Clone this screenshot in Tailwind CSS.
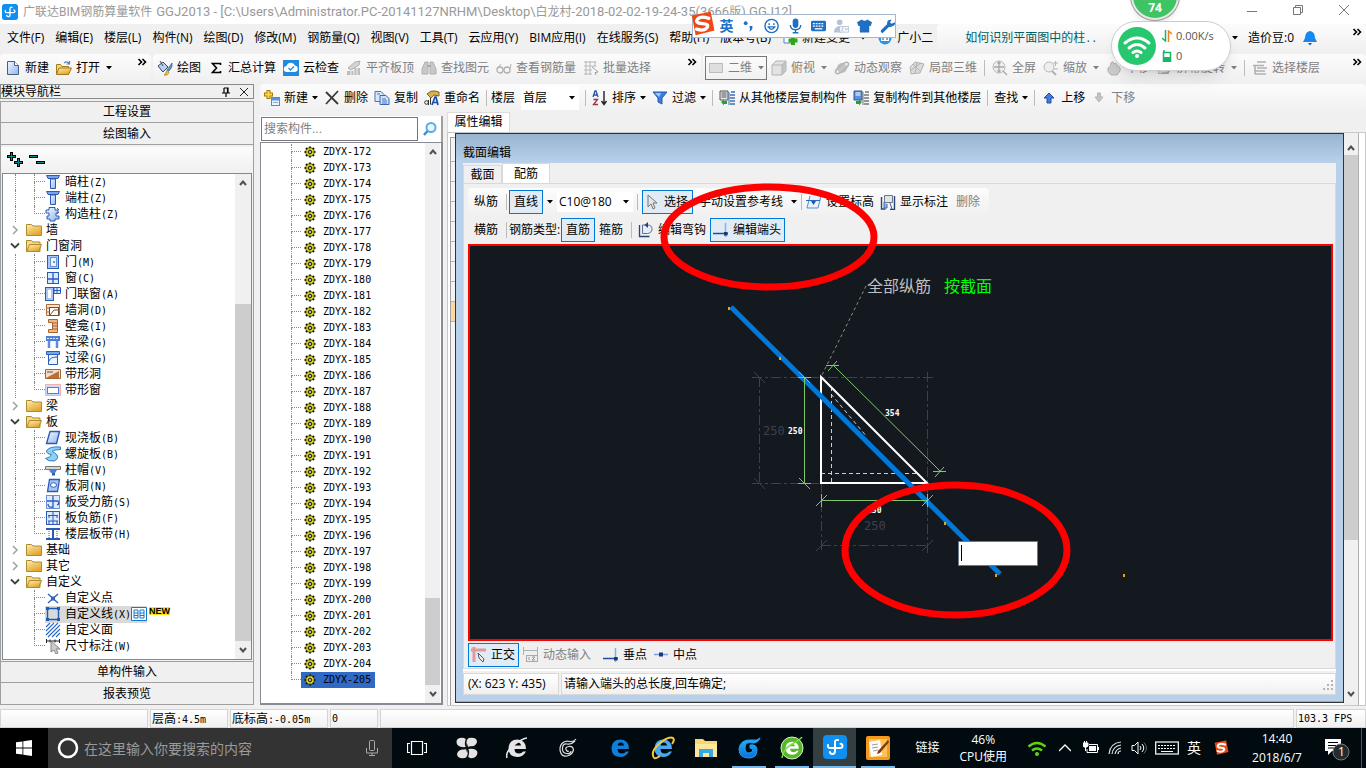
<!DOCTYPE html>
<html lang="zh-CN">
<head>
<meta charset="utf-8">
<title>广联达BIM钢筋算量软件 GGJ2013</title>
<script src="https://cdn.jsdelivr.net/npm/@tailwindcss/browser@4"></script>
</head>
<body class="relative flex h-screen flex-col overflow-hidden bg-[#f0f0f0] font-['Open_Sans','Noto_Sans_CJK_SC',sans-serif] text-xs leading-4 whitespace-nowrap text-black">

<svg class="absolute size-0">
  <defs>
    <linearGradient id="gBlue" x1="0" y1="0" x2="1" y2="1"><stop offset="0" stop-color="#f4f9ff"/><stop offset="1" stop-color="#8fb4f0"/></linearGradient>
    <linearGradient id="gGold" x1="0" y1="0" x2="0.6" y2="1"><stop offset="0" stop-color="#fdf0b0"/><stop offset="1" stop-color="#e2a52c"/></linearGradient>
    <linearGradient id="gSky" x1="0" y1="0" x2="0" y2="1"><stop offset="0" stop-color="#29b6ff"/><stop offset="1" stop-color="#0a6fd8"/></linearGradient>
  </defs>
  <symbol id="dn" viewBox="0 0 6 4"><path d="M0 0h6L3 3.5z" fill="currentColor"/></symbol>
  <symbol id="more" viewBox="0 0 9 8"><path d="M1 1l3 3-3 3M5 1l3 3-3 3" fill="none" stroke="#000" stroke-width="1.6"/></symbol>
  <symbol id="up-chev" viewBox="0 0 8 6"><path d="M1 5l3-3.5L7 5" fill="none" stroke="#505050" stroke-width="2"/></symbol>
  <symbol id="dn-chev" viewBox="0 0 8 6"><path d="M1 1l3 3.5L7 1" fill="none" stroke="#505050" stroke-width="2"/></symbol>
  <symbol id="ggj" viewBox="0 0 24 24"><rect width="24" height="24" rx="4" fill="#0f8fef"/><path d="M15 5q-3-.5-3 2v9q0 3-2.500 3t-2.500-2M5 10q-.5 3 2 3h10q2.500 0 2.500-2t-2-2.200" fill="none" stroke="#fff" stroke-width="2" stroke-linecap="round"/></symbol>
  <symbol id="doc" viewBox="0 0 16 16"><path d="M2.500 1.500h7l4 4v9h-11z" fill="url(#gBlue)" stroke="#47607f"/><path d="M9.500 1.500v4h4" fill="#fff" stroke="#47607f"/></symbol>
  <symbol id="open" viewBox="0 0 16 16"><path d="M.5 14V4.500h4l1.500 2h6.500V14z" fill="#f7d874" stroke="#a37a1d"/><path d="M3 8h12.500l-3 6.500H.500z" fill="url(#gGold)" stroke="#a37a1d"/><path d="M8 3q3-2.500 5 .5M13.500 1v3h-3" fill="none" stroke="#5b82b5" stroke-width="1.200"/></symbol>
  <symbol id="draw" viewBox="0 0 16 16"><path d="M1 6l5-4 5 5-5 5z" fill="#b9d1ef" stroke="#2c4a7a"/><path d="M3 1l3 5" stroke="#444"/><path d="M15 3q1 4-3 8l-2-1z" fill="#6b93cf" stroke="#36578c" stroke-width=".7"/><path d="M10 10l2 2q-1 4-5 3 2-1 3-5z" fill="#f1c231" stroke="#a67a12" stroke-width=".7"/></symbol>
  <symbol id="sum" viewBox="0 0 16 16"><path d="M12.500 5V3.500h-8l4 4.500-4 4.500h8V11" fill="none" stroke="#000" stroke-width="1.600"/></symbol>
  <symbol id="cloud" viewBox="0 0 16 16"><rect width="16" height="16" fill="#1f8ae0"/><path d="M4 12a3 3 0 01-.5-6A4.500 4.500 0 0112 5.500 3.300 3.300 0 0112 12z" fill="#fff"/><path d="M5.500 8l2 2L11 6.500" fill="none" stroke="#1f8ae0" stroke-width="1.300"/></symbol>
  <symbol id="g-flat" viewBox="0 0 16 16"><path d="M2 8l7-6 5-1-1 4-8 5z" fill="#d4d4d4" stroke="#b0b0b0"/><path d="M1 11h7V8h6v7H1z" fill="#bdbdbd"/><path d="M5 11v4M8 9v6M11 8v7" stroke="#eee"/></symbol>
  <symbol id="g-bino" viewBox="0 0 16 16"><path d="M4 2h3v12H1V9zM9 2h3l3 7v5H9z" fill="#c8c8c8" stroke="#b0b0b0"/><path d="M6 6h4" stroke="#aaa" stroke-width="2"/></symbol>
  <symbol id="g-glass" viewBox="0 0 16 16"><circle cx="4" cy="10" r="3" fill="none" stroke="#b0b0b0" stroke-width="1.300"/><circle cx="11" cy="10" r="3" fill="none" stroke="#b0b0b0" stroke-width="1.300"/><path d="M1 9l4-5M14 9l1-5" stroke="#b0b0b0"/></symbol>
  <symbol id="g-batch" viewBox="0 0 16 16"><path d="M1 2h12M1 6h12M1 10h8M1 14h8M3 1v14M7 1v14M12 1v6" stroke="#b8b8b8"/><path d="M9 7l6 5-3 .5 1 2.500" fill="#fff" stroke="#9a9a9a"/></symbol>
  <symbol id="g-rect" viewBox="0 0 16 16"><rect x="1.500" y="3.500" width="13" height="9" fill="#dedede" stroke="#bcbcbc"/></symbol>
  <symbol id="g-cube" viewBox="0 0 16 16"><path d="M1 5l4-4h10v10l-4 4H1z" fill="#e2e2e2" stroke="#b4b4b4"/><path d="M11 5l4-4v10l-4 4z" fill="#c4c4c4"/><path d="M1 5h10v10M11 5l4-4" fill="none" stroke="#b4b4b4"/></symbol>
  <symbol id="g-orbit" viewBox="0 0 16 16"><circle cx="8" cy="8" r="5" fill="#c4c4c4"/><ellipse cx="8" cy="8" rx="8" ry="3" transform="rotate(-40 8 8)" fill="none" stroke="#b4b4b4" stroke-width="1.500"/></symbol>
  <symbol id="g-part" viewBox="0 0 16 16"><path d="M1 7l5-5 9 2-4 9-9 1z" fill="#dadada" stroke="#b4b4b4"/><path d="M4 4l8 8M2 10l10-7M8 2L6 14" stroke="#b4b4b4"/></symbol>
  <symbol id="g-full" viewBox="0 0 16 16"><circle cx="7" cy="7" r="6" fill="#eee" stroke="#b8b8b8"/><path d="M7 2v10M2 7h10M5.500 3.500L7 2l1.500 1.500M5.500 10.500L7 12l1.500-1.500M11 11l4 4" fill="none" stroke="#a8a8a8" stroke-width="1.300"/></symbol>
  <symbol id="g-zoom" viewBox="0 0 16 16"><circle cx="6" cy="7" r="5" fill="#eee" stroke="#b8b8b8"/><path d="M9 11l4 4" stroke="#b0b0b0" stroke-width="2"/><path d="M10 3h5M12.500 1v5M11 9h4" stroke="#b5b5b5"/></symbol>
  <symbol id="g-hand" viewBox="0 0 16 16"><path d="M2 8q3-1 3-5 2-3 3 1 3-2 3 2 4 0 3 5l-3 4H5q-4-3-3-7z" fill="#ccc" stroke="#b0b0b0"/></symbol>
  <symbol id="g-rot" viewBox="0 0 16 16"><rect x="1.500" y="3.500" width="10" height="10" fill="#ddd" stroke="#b8b8b8"/><path d="M5 13q8 2 9-8M12 7l2-3 2 3" fill="none" stroke="#a4a4a4" stroke-width="1.500"/></symbol>
  <symbol id="g-floor" viewBox="0 0 16 16"><path d="M5 2h9M1 5.500h11M5 8h10M3 11h10M3 14h11M3 6v8" stroke="#b0b0b0" stroke-width="1.600"/></symbol>
  <symbol id="newc" viewBox="0 0 16 16"><rect x="7.500" y="7.500" width="8" height="8" fill="#eaf3ff" stroke="#5c87c5"/><path d="M8 8h8v2.500H8z" fill="#5c93dd"/><path d="M9 12.500h5" stroke="#8ab"/><path d="M4.500 0v9M0 4.500h9" stroke="#a67c00" stroke-width="4"/><path d="M4.500 1v7M1 4.500h7" stroke="#ffd944" stroke-width="2"/></symbol>
  <symbol id="del" viewBox="0 0 16 16"><path d="M2 2l12 12M14 1L2 14" stroke="#3a3a3a" stroke-width="1.800"/></symbol>
  <symbol id="copy" viewBox="0 0 16 16"><path d="M1 1.500h6l3 3v7H1z" fill="#dbe8fb" stroke="#4a73b4"/><path d="M6 5.500h6l3 3v6H6z" fill="#cfe1fb" stroke="#3d66ab"/><path d="M8 9h4M8 11h5M8 13h5M3 4h3" stroke="#4a73b4"/></symbol>
  <symbol id="ren" viewBox="0 0 16 16"><path d="M3 4q4-4 8-3l4 1v4l-5-1-3 3z" fill="#d8b347" stroke="#7d6520"/><path d="M8 15l3-8h1l2 8M9 12.500h4" fill="none" stroke="#1b4fa8" stroke-width="1.700"/><circle cx="2.500" cy="12.500" r="1.800" fill="none" stroke="#333"/><path d="M4.500 10v5M6.500 8v6.500" stroke="#333"/></symbol>
  <symbol id="az" viewBox="0 0 16 16"><path d="M1 7l2-6h1l2 6M2 5h3" fill="none" stroke="#2b4fa8" stroke-width="1.300"/><path d="M1.500 9.500h4l-4 5h4.500" fill="none" stroke="#a03050" stroke-width="1.300"/><path d="M12 1v13M9.500 11l2.500 3.500 2.500-3.500" fill="none" stroke="#222" stroke-width="1.400"/></symbol>
  <symbol id="filter" viewBox="0 0 16 16"><path d="M1 2h14L10 8v6l-4-2V8z" fill="#3f7de0" stroke="#2459b0"/><path d="M3 3h6L7 7z" fill="#a9c9fa"/></symbol>
  <symbol id="cfrom" viewBox="0 0 16 16"><path d="M1 1h8v9H1z" fill="#e5e5e5" stroke="#555"/><path d="M2.500 3h5M2.500 5h5M2.500 7h5" stroke="#555"/><path d="M12 2h4M11 5h5M11 8h5M11 11h5M11 14h5" stroke="#3d6db8" stroke-width="1.700"/><path d="M10 2v13" stroke="#3d6db8"/><path d="M2 12l3-2.500V11h3v3H5v1.500z" fill="#1ea33a"/></symbol>
  <symbol id="cto" viewBox="0 0 16 16"><path d="M1 1h8v9H1z" fill="#5c91dc" stroke="#2a5599"/><path d="M2.500 3h5M2.500 5h5" stroke="#fff"/><path d="M12 2h4M11 5h5M11 8h5M11 11h5M11 14h5" stroke="#777" stroke-width="1.700"/><path d="M10 2v13" stroke="#777"/><path d="M9 12L6 9.500V11H3v3h3v1.500z" fill="#1ea33a"/></symbol>
  <symbol id="a-up" viewBox="0 0 16 16"><path d="M8 3l5 5h-3v5H6V8H3z" fill="#3f7de0" stroke="#234f9e"/></symbol>
  <symbol id="a-dn" viewBox="0 0 16 16"><path d="M8 12l4-5h-2.500V3h-3v4H4z" fill="#c4c4c4" stroke="#b4b4b4"/></symbol>
  <symbol id="gear" viewBox="0 0 12 12"><path d="M6 .5v11M.5 6h11M2 2l8 8M10 2l-8 8" stroke="#1c1c00" stroke-width="2.200"/><circle cx="6" cy="6" r="4.200" fill="#f2ea2a" stroke="#2a2a00" stroke-width=".8"/><path d="M6 2.500v7M2.500 6h7M3.700 3.700l4.600 4.600M8.300 3.700L3.700 8.300" stroke="#5a5600" stroke-width=".7"/><circle cx="6" cy="6" r="1.500" fill="#fff" stroke="#111"/></symbol>
  <symbol id="folder" viewBox="0 0 16 16"><path d="M.5 13.500v-11h5l1.500 1.500h8.500v9.500z" fill="url(#gGold)" stroke="#b08a30"/></symbol>
  <symbol id="folderO" viewBox="0 0 16 16"><path d="M.5 13.500v-11h5l1.500 1.500h7v9.500z" fill="#f3d886" stroke="#b08a30"/><path d="M3.500 6.500h12l-3 7H.8z" fill="url(#gGold)" stroke="#b08a30"/></symbol>
  <symbol id="t-col" viewBox="0 0 16 16"><path d="M1.500 1.500h13l-1.500 3H3z" fill="#7aa4ea" stroke="#2b5bb8"/><path d="M5.500 5h5v9.500h-5z" fill="url(#gBlue)" stroke="#2b5bb8"/></symbol>
  <symbol id="t-gz" viewBox="0 0 16 16"><path d="M4 1.500h6V4h3v3h-2v3h3v3h-4v2H5v-2H2v-3h2V7H1V4h3z" fill="url(#gBlue)" stroke="#2b5bb8"/><path d="M12 2l2 2M12 8l2-2" stroke="#557"/></symbol>
  <symbol id="t-door" viewBox="0 0 16 16"><rect x="2.500" y="1.500" width="11" height="13" fill="#a9c6f7" stroke="#2b5bb8"/><rect x="5.500" y="3.500" width="6" height="9" fill="#eaf3ff" stroke="#6c93d8"/><path d="M9 7v2" stroke="#234"/></symbol>
  <symbol id="t-win" viewBox="0 0 16 16"><rect x="2.500" y="2.500" width="11" height="11" fill="#dceaff" stroke="#2b5bb8"/><path d="M8 2v12M2 9h12" stroke="#2b5bb8" stroke-width="1.300"/></symbol>
  <symbol id="t-dw" viewBox="0 0 16 16"><rect x=".5" y="1.500" width="8" height="13" fill="#a9c6f7" stroke="#2b5bb8"/><rect x="3" y="4" width="3" height="8" fill="#fff"/><path d="M9 1.500h6.500v6H9zM12 1v7M9 4.500h7" fill="#dceaff" stroke="#2b5bb8"/></symbol>
  <symbol id="t-hole" viewBox="0 0 16 16"><path d="M1.500 2.500h13v11h-13zM1 6h4M1 10h4" fill="#fbe3d0" stroke="#b06a3a"/><rect x="4.500" y="5.500" width="9" height="8" fill="#fff" stroke="#7d4a28"/><path d="M5 13l4-5h4" fill="none" stroke="#7d4a28"/></symbol>
  <symbol id="t-niche" viewBox="0 0 16 16"><path d="M3.500 1.500h9v13h-9v-3h4v-7h-4z" fill="#f0b98a" stroke="#a8642e"/><path d="M8 5h4M8 8h4M8 11h4" stroke="#a8642e"/></symbol>
  <symbol id="t-beam" viewBox="0 0 16 16"><path d="M1 2h14v5H1z" fill="#4c7fd6"/><path d="M2 4.500h12" stroke="#dce9ff" stroke-dasharray="2 1"/><path d="M4 7v7M12 7v7" stroke="#5c8de0" stroke-width="2.500"/></symbol>
  <symbol id="t-lintel" viewBox="0 0 16 16"><path d="M1.500 1.500h13v3h-13z" fill="#7aa4ea" stroke="#2b5bb8"/><path d="M3.500 4.500h9v10h-9z" fill="#eaf3ff" stroke="#2b5bb8"/><path d="M4 11q1-4 8-4" fill="none" stroke="#2b5bb8"/></symbol>
  <symbol id="t-strip" viewBox="0 0 16 16"><path d="M.5 3.500h15v9H.5z" fill="#f6dcc8" stroke="#a8642e"/><path d="M1 12L14 5v7z" fill="#b4703f"/><path d="M2 6h6" stroke="#7d4a28"/></symbol>
  <symbol id="t-stripw" viewBox="0 0 16 16"><path d="M.5 2.500h15v11H.5z" fill="#c9dcfb" stroke="#f0b0b0"/><rect x="2.500" y="5.500" width="11" height="6" fill="#fff" stroke="#4c7fd6"/></symbol>
  <symbol id="t-slab" viewBox="0 0 16 16"><path d="M5 1.500h9.500l-3 12H1.500z" fill="url(#gBlue)" stroke="#2b5bb8" stroke-width="1.400"/></symbol>
  <symbol id="t-spiral" viewBox="0 0 16 16"><path d="M15.500 1Q4 0 1.500 5q0 3 5 3.500-1 3-6 4Q3 15.500 9 15q5-2 3-6Q9 6 7 5.500q2-2 8.500-2z" fill="#8fd0f5" stroke="#2f7ec4"/></symbol>
  <symbol id="t-cap" viewBox="0 0 16 16"><path d="M.5 4.500h15v3H.5z" fill="#d8d4c8" stroke="#777"/><path d="M4 8h8l-2 3H6z" fill="#4c7fd6"/><path d="M7 11h3v2.500H7z" fill="#2b5bb8"/></symbol>
  <symbol id="t-shole" viewBox="0 0 16 16"><path d="M4.500 1.500h10l-2 12h-10z" fill="#a9c6f7" stroke="#2b5bb8" stroke-width="1.300"/><ellipse cx="8.500" cy="7" rx="3" ry="2.300" fill="#fff" stroke="#2b5bb8"/></symbol>
  <symbol id="t-bar" viewBox="0 0 16 16"><rect x="1.500" y="1.500" width="13" height="13" fill="#dceaff" stroke="#6c93d8"/><path d="M8 2v12M2 7h11q2 3-1 4M8 13q-5 1-5-3" fill="none" stroke="#2b5bb8" stroke-width="1.300"/></symbol>
  <symbol id="t-neg" viewBox="0 0 16 16"><rect x="1.500" y="1.500" width="13" height="13" fill="#dceaff" stroke="#2b5bb8"/><path d="M8 2v12M3 5.500h10M3 11h10M4 5v3M12 5v3M4 11v3M12 11v3" stroke="#2b5bb8"/></symbol>
  <symbol id="t-band" viewBox="0 0 16 16"><path d="M1 3h14M1 13h14" stroke="#2b5bb8" stroke-width="2"/><path d="M4 3v10M12 3v10" stroke="#2b5bb8" stroke-dasharray="1 1"/><path d="M8 3v10" stroke="#2b5bb8" stroke-width="2"/></symbol>
  <symbol id="t-pt" viewBox="0 0 16 16"><path d="M3 4l10 9M13 4L3 13" stroke="#3567b8" stroke-width="1.400"/><rect x="6" y="6.500" width="4" height="4" fill="#3567b8"/></symbol>
  <symbol id="t-line" viewBox="0 0 16 16"><path d="M2.500 2.500h11v11h-11z" fill="none" stroke="#1c5cb8" stroke-width="1.400"/><path d="M1 1h3v3H1zM12 1h3v3h-3zM1 12h3v3H1zM12 12h3v3h-3z" fill="#1c5cb8"/></symbol>
  <symbol id="t-face" viewBox="0 0 16 16"><path d="M1 5l4-4M1 9l8-8M1 13l12-12M3 15L15 3M7 15l8-8M11 15l4-4" stroke="#2b6bc8" stroke-width="1.100"/></symbol>
  <symbol id="t-dim" viewBox="0 0 16 16"><path d="M1 3h14M1.500 1v4M14.500 1v4M5 1.500v3M10 1.500v3" stroke="#222"/><path d="M6 3l9 8h-4l2 4-2 1-2-4-3 2z" fill="#ccc" stroke="#888"/></symbol>
  <symbol id="cursor" viewBox="0 0 16 16"><path d="M4 1v12l3-3 2 5 2-1-2-5h4z" fill="#e4e4e4" stroke="#777"/></symbol>
  <symbol id="perp" viewBox="0 0 16 16"><path d="M12.500 1v14" stroke="#85b0e0" stroke-width="1.500"/><path d="M0 11.500h15" stroke="#1c4f9c" stroke-width="1.500"/><rect x="11" y="10" width="3.500" height="3.500" fill="#163a80"/></symbol>
  <symbol id="sogou" viewBox="0 0 28 28"><path d="M3 5l20-4 4 20-20 5z" fill="#ee4a16"/><path d="M21 8Q12 5 9 9t5 4.500 5 4.500-11 1.500" fill="none" stroke="#fff" stroke-width="3.500" stroke-linecap="round"/></symbol>
  <symbol id="e" viewBox="0 0 24 24"><path d="M21 15.500q-3 5.500-9 5.500-8.500-.5-8.500-9Q4 3.500 12.500 3.500q8.500.5 8.500 9.500H9.500q0 4.500 4.500 4.500 3 0 4-2zM9.500 9.500H16q-.5-3-3.200-3T9.500 9.500z" fill="currentColor" fill-rule="evenodd"/></symbol>
</svg>

<!-- Title bar -->
<header class="flex h-6 shrink-0 items-center gap-1 bg-white pl-0.5 text-[#999]">
  <svg class="size-4"><use href="#ggj"/></svg>
  <h1 class="flex flex-1 items-baseline overflow-hidden pl-px font-['Roboto','Noto_Sans_CJK_SC',sans-serif]">广联达BIM钢筋算量软件<span class="ml-1 text-[13px]">GGJ2013 - [C:\Users\Administrator.PC-20141127NRHM\Desktop\</span>白龙村<span class="text-[13px]">-2018-02-02-19-24-35(3666</span>版<span class="text-[13px]">).GGJ12]</span></h1>
  <div class="flex pb-1">
    <button class="flex w-11 justify-center" aria-label="最小化"><svg class="size-3" viewBox="0 0 12 12"><path d="M1 7.500h10" stroke="#777"/></svg></button>
    <button class="flex w-12 justify-center" aria-label="还原"><svg class="size-3" viewBox="0 0 12 12"><path d="M1.500 3.500h7v7h-7zM3.500 3V1.500h7v7H9" fill="none" stroke="#777"/></svg></button>
    <button class="flex w-11 justify-center" aria-label="关闭"><svg class="size-3" viewBox="0 0 12 12"><path d="M1 1l10 10M11 1L1 11" stroke="#777"/></svg></button>
  </div>
</header>

<!-- Menu bar -->
<nav class="flex h-[30px] shrink-0 items-center pb-0.5">
  <div id="menu" class="flex items-center gap-[11px] pl-[7px]"></div>
  <div class="ml-1 flex flex-1 items-center self-stretch rounded bg-linear-to-b from-[#fcfcfc] to-[#f0f0f0] pr-1 pl-7">
    <a href="#" class="font-['DejaVu_Sans_Mono','Noto_Sans_CJK_SC',monospace] text-[#006064]">如何识别平面图中的柱<span class="text-[10px]">..</span></a>
    <button class="ml-auto flex items-center gap-2.5"><svg class="h-1 w-1.5"><use href="#dn"/></svg>造价豆:0</button>
    <button class="mr-8.5 ml-2" aria-label="通知"><svg class="size-4" viewBox="0 0 16 16"><path d="M8 1q5 1 5 7l2 4H1l2-4q0-6 5-7z" fill="#1688f0"/><path d="M6 13h4l-2 2.500z" fill="#0b5cb0"/></svg></button>
    <svg class="mb-3 h-2 w-2.5"><use href="#more"/></svg>
  </div>
</nav>

<!-- Main toolbar -->
<div class="flex h-[30px] shrink-0 items-stretch gap-0.5 pb-0.5">
  <div class="flex w-[151px] items-center gap-[7px] rounded bg-linear-to-b from-[#fcfcfc] to-[#f0f0f0] pl-[5px]">
    <button class="flex items-center gap-1"><svg class="size-4"><use href="#doc"/></svg>新建</button>
    <button class="flex items-center gap-1"><svg class="size-4"><use href="#open"/></svg>打开<svg class="ml-0.5 h-1 w-1.5"><use href="#dn"/></svg></button>
    <svg class="mr-1 mb-3 ml-auto h-2 w-2.5"><use href="#more"/></svg>
  </div>
  <div class="flex w-[548px] items-center rounded bg-linear-to-b from-[#fcfcfc] to-[#f0f0f0] pl-1">
    <div id="tb1" class="flex items-center gap-[7px]"></div>
    <svg class="mr-1 mb-3 ml-auto h-2 w-2.5"><use href="#more"/></svg>
  </div>
  <div class="flex flex-1 items-center rounded bg-linear-to-b from-[#fcfcfc] to-[#f0f0f0] pl-0.5 text-[#808080]">
    <button class="mr-1 flex h-6 w-[62px] items-center gap-1 border border-[#777] px-0.5"><svg class="size-4"><use href="#g-rect"/></svg>二维<svg class="ml-0.5 h-1 w-1.5"><use href="#dn"/></svg></button>
    <div id="tb2" class="flex items-center gap-[7px]"></div>
    <svg class="mr-1 mb-3 ml-auto h-2 w-2.5"><use href="#more"/></svg>
  </div>
</div>

<!-- Workspace -->
<main class="flex min-h-0 flex-1">
  <!-- Module navigation -->
  <aside class="flex w-[254px] shrink-0 flex-col font-['DejaVu_Sans_Mono','Noto_Sans_CJK_SC',monospace]">
    <div class="flex h-[15px] shrink-0 items-center border border-[#8a8a8a] pr-1">
      <h2 class="flex-1 leading-3">模块导航栏</h2>
      <button class="mr-2" aria-label="固定"><svg class="size-2.5" viewBox="0 0 10 10"><path d="M3 1h4v5M3 1v5M1 6h8M5 6v4M6.500 1v5" fill="none" stroke="#000" stroke-width="1.200"/></svg></button>
      <button aria-label="关闭面板"><svg class="size-2.5" viewBox="0 0 10 10"><path d="M1 1l8 8M9 1L1 9" stroke="#222"/></svg></button>
    </div>
    <div class="mt-0.5 flex flex-1 flex-col border-x border-[#a0a0a0]">
      <button class="h-[22px] shrink-0 border-b border-t border-t-[#a0a0a0] border-b-[#a0a0a0]">工程设置</button>
      <button class="h-[22px] shrink-0 border-b border-[#a0a0a0]">绘图输入</button>
      <div class="mt-0.5 flex h-[26px] shrink-0 items-center gap-1.5 bg-linear-to-b from-[#fcfcfc] to-[#f0f0f0] pl-1.5">
        <button aria-label="全部展开"><svg class="h-4 w-4" viewBox="0 0 16 16"><path d="M4.500 0v9M0 4.500h9M11.500 6v9M7 10.500h9" stroke="#000" stroke-width="3"/><path d="M4.500 1v7M1 4.500h7M11.500 7v7M8 10.500h7" stroke="#0a8a8a"/></svg></button>
        <button aria-label="全部折叠"><svg class="h-4 w-4" viewBox="0 0 16 16"><path d="M0 4.500h9M7 10.500h9" stroke="#000" stroke-width="3"/><path d="M1 4.500h7M8 10.500h7" stroke="#0a8a8a"/></svg></button>
      </div>
      <div class="mx-px flex flex-1 border border-[#7f8a96] bg-white">
        <ul id="tree" class="flex-1"></ul>
        <div class="flex w-4 flex-col items-center bg-[#f0f0f0] py-1.5">
          <svg class="h-1.5 w-2"><use href="#up-chev"/></svg>
          <div class="mt-[118px] w-full flex-1 bg-[#cdcdcd]"></div>
          <svg class="mt-1.5 h-1.5 w-2"><use href="#dn-chev"/></svg>
        </div>
      </div>
      <button class="mt-px h-[22px] shrink-0 border-y border-[#a0a0a0]">单构件输入</button>
      <button class="h-[22px] shrink-0 border-b border-[#a0a0a0]">报表预览</button>
    </div>
    <div class="h-0.5 shrink-0"></div>
  </aside>

  <section class="ml-1.5 flex min-w-0 flex-1 flex-col">
    <div id="tb3" class="flex h-7 shrink-0 items-center gap-1.5 rounded bg-linear-to-b from-[#fcfcfc] to-[#f0f0f0] pl-1"></div>
    <div class="flex min-h-0 flex-1">
      <!-- Component list -->
      <div class="flex w-[183px] shrink-0 flex-col pt-1 pb-0.5 font-['DejaVu_Sans_Mono','Noto_Sans_CJK_SC',monospace]">
        <div class="flex h-[26px] shrink-0 border-r-2 border-[#a0a0a0] bg-white">
          <input class="my-px ml-px w-[157px] border border-[#777] px-0.5 font-['Liberation_Sans','Noto_Sans_CJK_SC',sans-serif] text-xs placeholder:text-[#808080]" placeholder="搜索构件..." aria-label="搜索构件">
          <button class="flex flex-1 items-center justify-center" aria-label="搜索"><svg class="size-4" viewBox="0 0 16 16"><circle cx="9" cy="6.500" r="4.500" fill="#eaf6ff" stroke="#58aee8" stroke-width="2"/><path d="M5.500 10L2 14" stroke="#3c8fd0" stroke-width="2.500"/></svg></button>
        </div>
        <div class="flex flex-1 border border-r-2 border-b-2 border-[#8a8a94] bg-white">
          <ul id="list" class="flex-1 pt-px text-[10px]"></ul>
          <div class="mr-px flex w-[15px] flex-col items-center bg-[#f0f0f0] pt-1.5 pb-1.5">
            <svg class="h-1.5 w-2"><use href="#up-chev"/></svg>
            <div class="mt-auto h-[87px] w-full bg-[#cdcdcd]"></div>
            <svg class="mt-1.5 h-1.5 w-2"><use href="#dn-chev"/></svg>
          </div>
        </div>
      </div>

      <!-- Property editor -->
      <div class="ml-1 flex min-w-0 flex-1 flex-col pb-px">
        <div class="flex h-5 shrink-0"><button class="w-[63px] border border-b-0 border-[#dcdcdc] bg-white pb-0.5">属性编辑</button></div>
        <div class="flex min-h-0 flex-1 border border-[#c8c8c8] bg-white">
          <div class="flex w-[7px] shrink-0 flex-col pt-1 pl-0.5">
            <div class="flex flex-1 flex-col divide-y divide-[#b5b5b5] border-t border-l border-[#a0a0a0] bg-[#f4f4f4]">
              <i class="h-6"></i><i class="h-5"></i><i class="h-5"></i><i class="h-5"></i><i class="h-5"></i><i class="h-5"></i><i class="h-5"></i><i class="h-5"></i><i class="h-5 bg-[#fbd9a0]"></i><i class="flex-1"></i>
            </div>
          </div>

          <!-- Section editor dialog -->
          <div class="mb-0.5 flex min-w-0 flex-1 flex-col border border-[#333] bg-[#b9d0ea]">
            <h2 class="flex h-[29px] shrink-0 items-center bg-linear-to-b from-[#99b4d1] to-[#b9d1ea] pt-2 pl-[7px]">截面编辑</h2>
            <div class="mx-[7px] flex flex-1 flex-col bg-[#f0f0f0]">
              <div class="flex h-5 shrink-0 items-end">
                <button class="h-[18px] w-[39px] border border-b-0 border-[#d9d9d9]">截面</button>
                <button class="h-5 w-12 border border-b-0 border-[#d9d9d9] bg-white">配筋</button>
              </div>
              <div class="flex flex-1 flex-col border border-[#d9d9d9] bg-[#f0f0f0] pt-1 pr-0.5 pl-1">
                <div class="flex h-7 w-[521px] shrink-0 items-center rounded bg-linear-to-b from-[#fcfcfc] to-[#f0f0f0] pl-1.5">
                  <span class="w-8">纵筋</span><i class="mr-0.5 h-4 w-px bg-[#bbb]"></i>
                  <button class="h-6 w-[34px] border border-[#0078d7] bg-[#e0ebf5]">直线</button>
                  <svg class="mx-1 h-1 w-1.5"><use href="#dn"/></svg>
                  <div class="flex h-5 w-[76px] items-center bg-white pr-1">
                    <select class="flex-1 appearance-none pl-0.5" aria-label="纵筋规格"><option>C10@180</option></select>
                    <svg class="h-1 w-1.5"><use href="#dn"/></svg>
                  </div>
                  <i class="mx-1 h-4 w-px bg-[#bbb]"></i>
                  <button class="flex h-6 w-[51px] items-center gap-1 border border-[#0078d7] bg-[#e0ebf5] pl-px"><svg class="size-4"><use href="#cursor"/></svg>选择</button>
                  <button class="ml-1.5 flex items-center gap-2">手动设置参考线<svg class="h-1 w-1.5"><use href="#dn"/></svg></button>
                  <i class="mx-1 h-4 w-px bg-[#bbb]"></i>
                  <button class="flex items-center gap-1"><svg class="size-4" viewBox="0 0 16 16"><path d="M4 2L1 14h11l3-12" fill="#e8f2ff" stroke="#4a90d9"/><path d="M0 6.500h14" stroke="#2a6ac0"/><path d="M5 7l2.500 4L10 7z" fill="#1858b0"/></svg>设置标高</button>
                  <button class="ml-1.5 flex items-center gap-1"><svg class="size-4" viewBox="0 0 16 16"><path d="M1.500 3v12h4M10 15.500h4.500V2" fill="none" stroke="#24467c" stroke-width="1.400"/><path d="M4.500 1.500h8v7h-8z" fill="#dce6f2" stroke="#777"/><path d="M10 9l2 6M4 8v6h3v-4" fill="#8fb4e8" stroke="#3d66ab"/></svg>显示标注</button>
                  <button class="ml-2 text-[#808080]">删除</button>
                </div>
                <div class="flex h-7 shrink-0 items-center pl-1.5">
                  <span class="w-8">横筋</span><i class="mr-0.5 h-4 w-px bg-[#bbb]"></i><span class="w-[52px]">钢筋类型:</span>
                  <button class="h-6 w-[34px] border border-[#0078d7] bg-[#e0ebf5]">直筋</button>
                  <button class="ml-1">箍筋</button>
                  <i class="mr-1.5 ml-2 h-4 w-px bg-[#bbb]"></i>
                  <button class="flex items-center gap-1"><svg class="size-4" viewBox="0 0 16 16"><path d="M1.500 3v11.500h10" fill="none" stroke="#24467c" stroke-width="1.300"/><path d="M4.500 3v8.500h5q4.500-.5 4.500-4.500T9.500 3z" fill="#e8eef8" stroke="#5c6f9c"/><path d="M10 0v6L6.500 3z" fill="#24467c"/></svg>编辑弯钩</button>
                  <button class="ml-1 flex h-6 w-[75px] items-center gap-1 border border-[#0078d7] bg-[#e0ebf5] pl-0.5"><svg class="size-4"><use href="#perp"/></svg>编辑端头</button>
                </div>

                <!-- Drawing canvas -->
                <div class="relative z-10 min-h-0 flex-1 border-2 border-[#f00] bg-[#14181f]">
                  <svg class="absolute inset-0 size-full overflow-visible font-['DejaVu_Sans_Mono','Noto_Sans_CJK_SC',monospace]">
                    <g transform="translate(-470 -246)" fill="none">
                      <g stroke="#3c424c" stroke-dasharray="10 3 3 3">
                        <path d="M752 377.500h181M752 483.500h69M759.500 377v106M821.500 483v70M927.500 372v181M821 545.500h107"/>
                        <path d="M754 372l11 11M754 478l11 11M816 551l11-11M922 551l11-11" stroke-dasharray="none"/>
                      </g>
                      <path d="M866 286L822 375" stroke="#8c8c8c" stroke-dasharray="3 3"/>
                      <path d="M831.500 387v96M821 473.500h96M831 394l36 43" stroke="#b5d2ee" stroke-dasharray="4 3"/>
                      <path d="M821 377v106h106z" stroke="#fff" stroke-width="2"/>
                      <path d="M731 307l269 267" stroke="#0078d7" stroke-width="5"/>
                      <path d="M804.500 377v106M799 372l11 11M799 478l11 11M798 377.500h13M798 483.500h13M821 500.500h107M816 506l11-11M922 506l11-11M821.500 494v13M927.500 494v13M833 365l107 106M828 371l9-10M826 365.500h13M935 477l9-10M933 471.500h13" stroke="#7fc86a"/>
                      <g fill="#e8a020"><path d="M728 307h2v3h-2zM779 357h2v3h-2zM944 522h2v3h-2zM995 574h2v3h-2zM1123 574h2v3h-2z"/></g>
                      <g class="text-base" fill="#c0c0c0"><text x="867" y="292">全部纵筋</text><text x="944" y="292" fill="#00ff00">按截面</text></g>
                      <g class="text-xs" fill="#3c424c"><text x="763" y="435">250</text><text x="864" y="530">250</text></g>
                      <g class="text-[8px] font-bold" fill="#fff"><text x="788" y="434">250</text><text x="885" y="416">354</text><text x="867" y="513">250</text></g>
                      <g stroke="#f00" stroke-width="7"><ellipse cx="769" cy="237" rx="105" ry="50"/><ellipse cx="956" cy="550" rx="111" ry="65"/></g>
                    </g>
                  </svg>
                  <input class="absolute top-[295px] left-[488px] h-[25px] w-20 border border-[#6a7a88] bg-white" aria-label="端头长度">
                  <i class="absolute top-[299px] left-[491px] h-4 w-px bg-black"></i>
                </div>

                <div class="flex h-[27px] shrink-0 items-center">
                  <button class="flex h-6 w-[51px] items-center gap-1 border border-[#0078d7] bg-[#e0ebf5] pl-0.5"><svg class="size-4" viewBox="0 0 16 16"><path d="M0 3h15M3 0v15" stroke="#e09a9a" stroke-width="3"/><path d="M7 6l6 6-1 3-4-4z" fill="#eee" stroke="#556"/></svg>正交</button>
                  <button class="ml-1 flex items-center gap-1 text-[#808080]"><svg class="size-4" viewBox="0 0 16 16"><path d="M.5 0v8M14.500 0v8M1 3.500h13" stroke="#b0b0b0"/><rect x="3.500" y="8.500" width="11" height="6" fill="#eee" stroke="#aaa"/><path d="M6 10v3M9 10h3l-3 3h3" fill="none" stroke="#999"/></svg>动态输入</button>
                  <button class="ml-3 flex items-center gap-1"><svg class="size-4"><use href="#perp"/></svg>垂点</button>
                  <button class="ml-1.5 flex items-center gap-1"><svg class="size-4" viewBox="0 0 16 16"><path d="M1 7.500h14" stroke="#7ba5dc" stroke-width="1.500"/><rect x="6" y="5.500" width="4" height="4" fill="#163a80"/></svg>中点</button>
                </div>
              </div>
              <div class="flex h-[26px] shrink-0 gap-0.5 border-t-2 border-white bg-[#f0f0f0] pt-0.5">
                <span class="w-24 border border-[#d9d9d9] bg-linear-to-b from-white to-[#f0f0f0] pl-1 leading-5">(X: 623 Y: 435)</span>
                <span class="flex flex-1 items-end justify-between border border-[#d9d9d9] bg-linear-to-b from-white to-[#f0f0f0] pl-0.5 leading-5">请输入端头的总长度,回车确定;
                  <svg class="mr-px mb-0.5 size-3" viewBox="0 0 12 12"><path d="M9 0h2v2H9zM9 4h2v2H9zM5 4h2v2H5zM9 8h2v2H9zM5 8h2v2H5zM1 8h2v2H1z" fill="#b4b4b4"/></svg></span>
              </div>
            </div>
            <div class="h-[7px] shrink-0 border-b border-[#5fc3e8]"></div>
          </div>

          <div class="mr-1.5 flex w-[15px] shrink-0 flex-col items-center border-r border-[#b0b0b0] bg-[#f0f0f0] pt-3 pb-2">
            <svg class="h-1.5 w-2"><use href="#up-chev"/></svg>
            <div class="mt-1 h-[385px] w-full bg-[#cdcdcd]"></div>
            <svg class="mt-auto h-1.5 w-2"><use href="#dn-chev"/></svg>
          </div>
        </div>
      </div>
    </div>
  </section>
</main>

<!-- Status bar -->
<footer class="flex h-[21px] shrink-0 gap-0.5 pt-0.5 font-['DejaVu_Sans_Mono','Noto_Sans_CJK_SC',monospace] leading-[18px] *:border *:border-[#d4d4d4] *:bg-linear-to-b *:from-white *:to-[#f0f0f0] *:pl-px">
  <span class="w-[148px]"></span>
  <span class="w-[78px]">层高<span class="text-[10px]">:4.5m</span></span>
  <span class="w-[98px]">底标高<span class="text-[10px]">:-0.05m</span></span>
  <span class="w-12 text-[10px]">0</span>
  <span class="flex-1"></span>
  <span class="w-[70px] text-[10px]">103.3 FPS</span>
</footer>

<!-- Windows taskbar -->
<div class="flex h-10 shrink-0 items-stretch bg-[#010b0f] text-white">
  <button class="flex w-12 items-center justify-center bg-black" aria-label="开始"><svg class="size-4" viewBox="0 0 16 16"><path d="M0 2.300L6.500 1.400V7.600H0zM7.300 1.300L16 0v7.600H7.300zM0 8.400h6.500v6.200L0 13.700zM7.300 8.400H16V16l-8.700-1.300z" fill="#fff"/></svg></button>
  <label class="flex w-[344px] items-center gap-1 bg-[#333] pl-2">
    <svg class="size-6" viewBox="0 0 24 24"><circle cx="12" cy="12" r="9" fill="none" stroke="#fff" stroke-width="2.500"/></svg>
    <input class="w-[276px] font-['Noto_Sans_CJK_SC',sans-serif] text-sm placeholder:text-[#9a9a9a]" placeholder="在这里输入你要搜索的内容">
    <svg class="h-4 w-4" viewBox="0 0 16 16"><rect x="5.500" y=".5" width="5" height="10" rx="1" fill="none" stroke="#aaa"/><path d="M2.500 8v5h11V8M8 13v3M5 15.500h6" fill="none" stroke="#aaa"/></svg>
  </label>
  <div class="flex *:flex *:w-[50px] *:items-center *:justify-center">
    <button aria-label="任务视图"><svg class="h-4 w-5" viewBox="0 0 20 16"><path d="M4.500 1.500h11v13h-11zM3 3.500H.500v9H3M17 3.500h2.500v9H17" fill="none" stroke="#fff" stroke-width="1.200"/></svg></button>
    <button aria-label="搜狗"><svg class="size-6" viewBox="0 0 24 24"><g fill="#e4e4e4"><path d="M11 11Q1 12 1.500 5 3 1 9 2q4 1 2 9zM13 11q-3-8 1-9 8-1 8 4-1 5-9 5z"/><path d="M11 13q3 8-1 9-8 1-8-4 1-5 9-5zM13 13q9-1 9.500 4-1 6-7.500 5-4-1-2-9z"/></g><path d="M12 2q-3 6 0 10t0 10M2 11q6 3 10 1t10 0" fill="none" stroke="#111" stroke-width="1.300"/></svg></button>
    <button aria-label="浏览器"><svg class="size-6 text-[#e6e6e6]" viewBox="0 0 24 24"><use href="#e"/><path d="M2 22Q0 16 9 9T22 2q-3 0-7 3" fill="none" stroke="#e6e6e6" stroke-width="1.500"/></svg></button>
    <button aria-label="广联达"><svg class="size-5" viewBox="0 0 20 20"><path d="M19 1q-2 3-6 2.500-5-1.500-8 2T3.500 14t6.500 4 6.500-6Q16 8 12 8.500t-3 3 3 1.500M18 3q-4 4-8 3t-4.500 4 4 5.500 4.500-2.500" fill="none" stroke="#e0e0e0" stroke-width="1.200"/></svg></button>
  </div>
  <div class="ml-1.5 flex *:flex *:w-[43px] *:items-center *:justify-center">
    <button class="text-[#0f7fdc]" aria-label="Edge"><svg class="size-6"><use href="#e"/></svg></button>
    <button class="text-[#4aa8ee]" aria-label="Internet Explorer"><svg class="size-6" viewBox="0 0 24 24"><use href="#e"/><path d="M3 22Q-1 16 8 8T22 2q2 2-1 6M3 22q2 1 6-2" fill="none" stroke="#f3c93a" stroke-width="2"/></svg></button>
    <button aria-label="文件资源管理器"><svg class="size-6" viewBox="0 0 24 24"><path d="M1 3h8l2 2h12v16H1z" fill="#f7d774"/><path d="M1 8h22v13H1z" fill="#fde79a"/><path d="M5 21v-8h14v8h-4v-4H9v4z" fill="#35a9e4"/></svg></button>
    <button class="bg-[linear-gradient(#76b9ed,#76b9ed)] bg-[length:34px_2px] bg-bottom bg-no-repeat" aria-label="广联达云"><svg class="size-6" viewBox="0 0 24 24"><path d="M23 2q-2 5-7 5-8-2-8 5 0 5 4 5t4-4l-3-1V9q7-1 7 5 0 8-8 8Q2 22 2 13q1-10 13-9 5 1 8-2z" fill="url(#gSky)" stroke="#1fa0f5"/></svg></button>
    <button class="bg-[linear-gradient(#76b9ed,#76b9ed)] bg-[length:34px_2px] bg-bottom bg-no-repeat" aria-label="360浏览器"><svg class="size-6 text-white" viewBox="0 0 24 24"><circle cx="12" cy="12" r="11" fill="#58b82c" stroke="#d8f0c8"/><svg x="3" y="3" width="18" height="18"><use href="#e"/></svg><path d="M2 22Q3 13 12 8T22 1" fill="none" stroke="#7ee03c" stroke-width="1.500"/></svg></button>
    <button class="border-b-2 border-[#76b9ed] bg-[#343f42]" aria-label="广联达钢筋算量"><svg class="size-6"><use href="#ggj"/></svg></button>
    <button class="bg-[linear-gradient(#76b9ed,#76b9ed)] bg-[length:34px_2px] bg-bottom bg-no-repeat" aria-label="文档编辑"><svg class="size-6" viewBox="0 0 24 24"><rect width="24" height="24" rx="2" fill="#f59a1c"/><path d="M3 3h18v18H3z" fill="#ffc35a"/><path d="M3 6l11-2 2 15-11 2z" fill="#fff"/><path d="M6 9l6-1M6 12l6-1M7 15l5-1" stroke="#999"/><path d="M22 4L12 15l-1 3 3-1L23 6z" fill="#7a3c0c"/></svg></button>
  </div>
  <div class="ml-auto flex items-center">
    <span class="mr-5">链接</span>
    <span class="mr-5 text-center leading-[17px]">46%<br>CPU使用</span>
    <div class="flex items-center gap-2">
      <svg class="size-5" viewBox="0 0 20 20"><path d="M1.500 8.500q8.500-7 17 0M5 12.500q5-4 10 0" fill="none" stroke="#5fd50e" stroke-width="2.500"/><circle cx="10" cy="16" r="2" fill="#5fd50e"/></svg>
      <svg class="mx-1 h-3 w-3" viewBox="0 0 12 12"><path d="M0 9l6-6 6 6" fill="none" stroke="#fff" stroke-width="1.300"/></svg>
      <svg class="size-4" viewBox="0 0 16 16"><path d="M6 4.500h8.500v8H4V9M15.500 7v3" fill="none" stroke="#fff"/><path d="M6 6h7v5H6z" fill="#fff"/><path d="M0 3h5v3q-2.500 3-5 0zM1.500 1v2M3.500 1v2M2.500 7v4" stroke="#fff" fill="#fff"/></svg>
      <svg class="size-4" viewBox="0 0 16 16"><path d="M2 14Q3 3 14 2M5 14Q6 6 14 5M8 14q1-5 6-6M11 14q0-3 3-3" fill="none" stroke="#e0e0e0" stroke-width="1.200"/></svg>
      <svg class="size-4" viewBox="0 0 16 16"><path d="M1 5.500h2.500L7 2v12l-3.500-3.500H1zM9 6q2 2 0 4M11 4q3.500 4 0 8" fill="none" stroke="#fff"/><path d="M13 2.500q5 5.500 0 11" fill="none" stroke="#666"/></svg>
      <svg class="h-4 w-6" viewBox="0 0 24 16"><rect x=".7" y="2" width="22.600" height="12" fill="none" stroke="#fff" stroke-width="1.200"/><path d="M3 5.500h18M3 8.500h18" stroke="#fff" stroke-dasharray="2 1"/><path d="M6 11.500h12" stroke="#fff"/></svg>
      <span class="text-sm">英</span>
      <svg class="mx-1 size-4"><use href="#sogou"/></svg>
    </div>
    <time class="ml-3 w-16 text-center leading-[19px]">14:40<br>2018/6/7</time>
    <button class="mr-2.5 ml-3.5 flex" aria-label="操作中心"><svg class="size-7" viewBox="0 0 28 28"><path d="M2 5h16v12h-9l-4 4v-4H2z" fill="#fff"/><path d="M5 8.500h10M5 11.500h10M5 14h7" stroke="#000"/><circle cx="18" cy="18" r="8" fill="#262b2e" stroke="#777"/><text x="15" y="22" font-size="12" fill="#fff">1</text></svg></button>
    <i class="h-full w-px bg-[#555]"></i>
    <i class="w-1"></i>
  </div>
</div>

<!-- Input method bar -->
<div class="absolute top-3.5 left-[692px] flex h-6 w-[204px] items-center gap-2 border border-[#a8b8cc] bg-white text-[#1f6fc4]">
  <svg class="-mt-1 -ml-1 size-7"><use href="#sogou"/></svg>
  <b class="-ml-1 text-sm leading-none">英</b>
  <svg class="size-4" viewBox="0 0 16 16"><circle cx="5" cy="5" r="2" fill="#1f6fc4"/><path d="M9 8h3q1 4-3 6 1-3 0-6z" fill="#1f6fc4"/></svg>
  <svg class="size-4" viewBox="0 0 16 16"><circle cx="8" cy="8" r="7" fill="none" stroke="#1f6fc4" stroke-width="1.500"/><path d="M4.500 9q3.500 5 7 0z" fill="none" stroke="#1f6fc4" stroke-width="1.300"/><path d="M5.500 5v2M10.500 5v2" stroke="#1f6fc4" stroke-width="1.500"/></svg>
  <svg class="size-4" viewBox="0 0 16 16"><rect x="5" y="0" width="6" height="10" rx="3" fill="#1f6fc4"/><path d="M2.500 7q0 5 5.500 5t5.500-5M8 12v3M5 15.200h6" fill="none" stroke="#1f6fc4" stroke-width="1.500"/></svg>
  <svg class="size-4" viewBox="0 0 16 16"><rect x="0" y="2.500" width="16" height="11" rx="1.500" fill="#1f6fc4"/><path d="M2 5.500h12M2 8.200h12" stroke="#fff" stroke-width="1.400" stroke-dasharray="2 1"/><path d="M4 11h8" stroke="#fff" stroke-width="1.400"/></svg>
  <svg class="size-4" viewBox="0 0 16 16"><circle cx="6" cy="4" r="3" fill="#b4c3d6"/><path d="M0 15q0-7 7-7v7z" fill="#b4c3d6"/><path d="M6 8.500h9.500v6H6z" fill="#fff" stroke="#b4c3d6"/><path d="M8 10h2l-2 3h2M12 10v2h2v-2" fill="none" stroke="#b4c3d6"/></svg>
  <svg class="size-4" viewBox="0 0 16 16"><path d="M5 1q3 3 6 0l5 3-1.500 4H13v7H3V8H1.500L0 4z" fill="#1f6fc4"/></svg>
  <svg class="size-4" viewBox="0 0 16 16"><path d="M2.500 13.500L9 7" stroke="#1f6fc4" stroke-width="3.500" stroke-linecap="round"/><path d="M12.500 1.500q-5-1-5 4t5 3 3-4.500l-3 1.500-2-1.500z" fill="#1f6fc4"/></svg>
</div>

<!-- Network monitor -->
<div class="absolute -top-7 left-[1131px] flex size-12 items-end justify-center rounded-full border-2 border-[#e8e8e8] bg-[#3fc463] pb-0.5 font-bold text-white shadow-md ring ring-[#999]">74</div>
<div class="absolute top-[21px] left-[1111px] flex h-[50px] w-[120px] items-center gap-1.5 rounded-full border border-[#ccc] bg-white pl-1.5 text-[11px] text-[#555] shadow-lg">
  <svg class="size-[38px]" viewBox="0 0 38 38"><circle cx="19" cy="19" r="19" fill="#27c76f"/><path d="M7 16q12-10 24 0M11 21q8-7 16 0M15 25.500q4-3 8 0" fill="none" stroke="#fff" stroke-width="3" stroke-linecap="round"/><circle cx="19" cy="29" r="2" fill="#fff"/></svg>
  <div class="grid grid-cols-[10px_auto] items-center gap-x-1 gap-y-1">
    <svg class="h-3 w-2.5" viewBox="0 0 10 12"><path d="M3.500 0v11L0 8" fill="none" stroke="#18b566" stroke-width="1.500"/><path d="M6.500 12V1L10 4" fill="none" stroke="#f08020" stroke-width="1.500"/></svg><span>0.00K/s</span>
    <svg class="h-3 w-2.5" viewBox="0 0 10 12"><path d="M1.500 2.500h7v9h-7zM2 0v3" fill="none" stroke="#18b566" stroke-width="1.500"/><path d="M1 7h8v5H1z" fill="#18b566"/></svg><span>0</span>
  </div>
</div>

<script>
const $ = id => document.getElementById(id);
const icon = name => `<svg class="size-4 shrink-0"><use href="#${name}"/></svg>`;
const arrow = '<svg class="h-1 w-1.5"><use href="#dn"/></svg>';
const bar = '<i class="h-4 w-px bg-[#bbb]"></i>';
const tool = (name, text, drop) => `<button class="flex items-center gap-1">${name ? icon(name) : ''}${text}${drop ? arrow : ''}</button>`;
const wideDrop = (name, text) => `<button class="flex items-center gap-1">${icon(name)}${text}<svg class="ml-0.5 h-1 w-1.5"><use href="#dn"/></svg></button>`;

const addPage = '<svg class="size-4" viewBox="0 0 16 16"><path d="M2 1h9v12H2z" fill="#fff" stroke="#4a80c0"/><path d="M11 6v9M6.500 10.500h9" stroke="#2fa51e" stroke-width="4"/></svg>';
const robot = '<svg class="size-4" viewBox="0 0 16 16"><circle cx="8" cy="8" r="6.500" fill="#2a94ea"/><path d="M4 7h8v4H4z" fill="#fff"/><path d="M6 8v2M10 8v2" stroke="#147"/></svg>';
$('menu').innerHTML = ['文件(F)','编辑(E)','楼层(L)','构件(N)','绘图(D)','修改(M)','钢筋量(Q)','视图(V)','工具(T)','云应用(Y)','BIM应用(I)','在线服务(S)','帮助(H)','版本号(B)']
  .map(t => `<button>${t}</button>`).join('')
  + `<button class="flex items-center gap-1">${addPage}新建变更<svg class="ml-1.5 h-1 w-1.5"><use href="#dn"/></svg></button>`
  + `<button class="flex items-center gap-1">${robot}广小二</button>`;

$('tb1').innerHTML = tool('draw','绘图') + tool('sum','汇总计算') + tool('cloud','云检查')
  + '<div class="flex gap-[7px] text-[#808080]">' + tool('g-flat','平齐板顶') + tool('g-bino','查找图元') + tool('g-glass','查看钢筋量') + tool('g-batch','批量选择') + '</div>';
$('tb2').innerHTML = wideDrop('g-cube','俯视') + tool('g-orbit','动态观察') + tool('g-part','局部三维') + bar + tool('g-full','全屏')
  + wideDrop('g-zoom','缩放') + tool('g-hand','平移') + wideDrop('g-rot','屏幕旋转') + bar + tool('g-floor','选择楼层');
$('tb3').innerHTML = tool('newc','新建',1) + tool('del','删除') + tool('copy','复制') + tool('ren','重命名')
  + `<div class="flex items-center gap-1">${bar}<label for="floor">楼层</label></div>`
  + `<div class="flex h-6 w-[58px] items-center bg-white pr-1"><select id="floor" class="flex-1 appearance-none pl-0.5"><option>首层</option></select>${arrow}</div>`
  + bar + tool('az','排序',1) + tool('filter','过滤',1) + bar + tool('cfrom','从其他楼层复制构件') + tool('cto','复制构件到其他楼层') + bar
  + tool('','查找',1) + bar + tool('a-up','上移') + '<div class="text-[#808080]">' + tool('a-dn','下移') + '</div>';

// Tree rows: [icon, label, shortcut]; folders are marked with + (closed) or - (open).
const rows = [['t-col','暗柱','(Z)'],['t-col','端柱','(Z)'],['t-gz','构造柱','(Z)'],['+','墙'],['-','门窗洞'],['t-door','门','(M)'],['t-win','窗','(C)'],
  ['t-dw','门联窗','(A)'],['t-hole','墙洞','(D)'],['t-niche','壁龛','(I)'],['t-beam','连梁','(G)'],['t-lintel','过梁','(G)'],['t-strip','带形洞'],['t-stripw','带形窗'],
  ['+','梁'],['-','板'],['t-slab','现浇板','(B)'],['t-spiral','螺旋板','(B)'],['t-cap','柱帽','(V)'],['t-shole','板洞','(N)'],['t-bar','板受力筋','(S)'],
  ['t-neg','板负筋','(F)'],['t-band','楼层板带','(H)'],['+','基础'],['+','其它'],['-','自定义'],['t-pt','自定义点'],['t-line','自定义线','(X)'],['t-face','自定义面'],['t-dim','尺寸标注','(W)']];
const isFolder = r => !r || r[0] === '+' || r[0] === '-';
$('tree').innerHTML = rows.map((r, i) => {
  if (isFolder(r)) {
    const open = r[0] === '-';
    const chev = open ? '<path d="M1 2.500l4 4 4-4" fill="none" stroke="#404040" stroke-width="1.800"/>' : '<path d="M3 1l4 4-4 4" fill="none" stroke="#a0a0a0" stroke-width="1.500"/>';
    return `<li class="flex h-4 items-center"><span class="flex w-[23px] justify-center"><svg class="size-2.5" viewBox="0 0 10 10">${chev}</svg></span>${icon(open ? 'folderO' : 'folder')}<span class="ml-1">${r[1]}</span></li>`;
  }
  const outer = i < 25 ? '<span class="ml-3 h-4 w-[19px] border-l border-dotted border-[#888]"></span>' : '<span class="ml-3 h-4 w-[19px]"></span>';
  const tail = isFolder(rows[i + 1]) ? '' : '<span class="block h-2 border-l border-dotted border-[#888]"></span>';
  const guide = `<span class="block h-4 w-[11px]"><span class="block h-2 border-b border-l border-dotted border-[#888]"></span>${tail}</span>`;
  const label = `${icon(r[0])}<span class="ml-1">${r[1]}<span class="text-[10px]">${r[2] || ''}</span></span>`;
  const body = r[0] === 't-line'
    ? `<span class="flex items-center bg-[#d9d9d9]">${label}<svg class="size-4" viewBox="0 0 16 16"><path d="M.5 1.500h15v13H.5z" fill="#fff" stroke="#1878c8"/><path d="M3 4h4v8H3zM9 4h4v8H9zM3 7h4M3 9.500h4M9 7h4M9 9.500h4" fill="none" stroke="#1878c8"/></svg></span><b class="mb-1.5 ml-0.5 bg-[#ffe11a] font-['Liberation_Sans',sans-serif] text-[9px] leading-2">NEW</b>`
    : label;
  return `<li class="flex h-4 items-center">${outer}${guide}${body}</li>`;
}).join('');

$('list').innerHTML = Array.from({length: 34}, (_, i) => {
  const last = i === 33;
  const tail = last ? '' : '<span class="block h-2 border-l border-dotted border-[#888]"></span>';
  return `<li class="ml-[30px] flex h-4 items-center"><span class="block h-4 w-[10px]"><span class="block h-2 border-b border-l border-dotted border-[#888]"></span>${tail}</span>`
    + `<span class="${last ? 'flex h-4 items-center gap-[7px] bg-[#316ac5] pr-1 pl-[3px]' : 'flex h-4 items-center gap-[7px] pl-[3px]'}"><svg class="size-3"><use href="#gear"/></svg>ZDYX-${172 + i}</span></li>`;
}).join('');
</script>
</body>
</html>
